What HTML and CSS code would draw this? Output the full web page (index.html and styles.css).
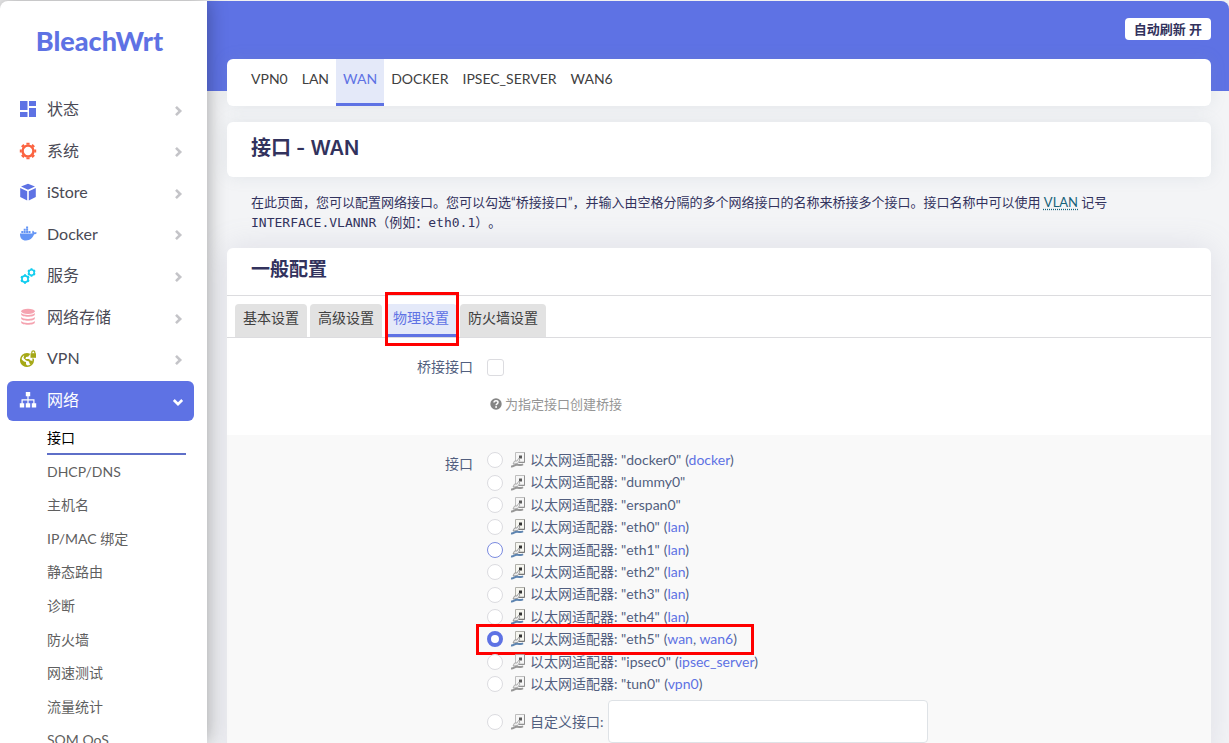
FILE: index.html
```html
<!DOCTYPE html>
<html lang="zh-CN">
<head>
<meta charset="utf-8">
<meta name="viewport" content="width=device-width, initial-scale=1">
<title>BleachWrt - 接口</title>
<link rel="stylesheet" href="styles.css">
</head>
<body>
<svg class="defs" aria-hidden="true">
  <symbol id="chevron" viewBox="0 0 12 12"><path d="M4 1.800 8.200 6 4 10.200" fill="none" stroke="currentColor" stroke-width="2.600"/></symbol>
  <symbol id="port" viewBox="0 0 16 16">
    <path d="M5.500 .5h9v9.500h-9z" fill="#f6f6f0" stroke="#b0b0aa" stroke-width="1"/>
    <path d="M14.500 .5v10H9" fill="none" stroke="#777" stroke-width="1"/>
    <rect class="port-dot" x="9" y="3.500" width="3" height="3"/>
    <path d="M3 12 4.500 9H7l1.500-2.500L10 8l-2.500 3.500z" fill="#eee" stroke="#888" stroke-width=".8"/>
    <path class="cable" d="M1 14.500c3 .3 3-1.700 6-1.700s4 1 6-.5" fill="none" stroke-width="2"/>
  </symbol>
</svg>
<div class="app">
  <aside class="sidebar">
    <a class="brand" href="#">BleachWrt</a>
    <nav aria-label="主菜单">
      <ul class="menu">
        <li><a href="#"><svg class="icon" viewBox="0 0 18 18" fill="#5e72e4"><path d="M1 1h7.500v9H1zM10 1h7v5h-7zM1 12h7.500v5H1zM10 8h7v9h-7z"/></svg><span>状态</span><svg class="arrow"><use href="#chevron"/></svg></a></li>
        <li><a href="#"><svg class="icon" viewBox="0 0 18 18" fill="none" stroke="#fb6340"><circle cx="9" cy="9" r="5.400" stroke-width="2.400"/><path stroke-width="3.200" d="M9 .8v2M9 15.200v2M.8 9h2M15.200 9h2M3.200 3.200l1.400 1.400M13.400 13.400l1.400 1.400M3.200 14.800l1.400-1.400M13.400 4.600l1.400-1.400"/></svg><span>系统</span><svg class="arrow"><use href="#chevron"/></svg></a></li>
        <li><a href="#"><svg class="icon" viewBox="0 0 18 18" fill="#5e72e4"><path d="M9 .7 16 3.600 9 6.800 2 3.600zM1.200 5l7 3.200v9.200l-7-3.400zM16.800 5l-7 3.200v9.200l7-3.400z"/></svg><span>iStore</span><svg class="arrow"><use href="#chevron"/></svg></a></li>
        <li><a href="#"><svg class="icon" viewBox="0 0 18 18" fill="#6495f5"><path d="M1 8.500h12.600c-.7-1-.5-2.200.3-3 .8.500 1.300 1.200 1.300 2 1-.3 2-.1 2.600.3-.4 1-1.400 1.500-2.700 1.500C13.800 13 11 15.500 7 15.500 3 15.500.8 13 1 8.500zM2.300 6.100h2v2h-2zM4.700 6.100h2v2h-2zM7.100 6.100h2v2h-2zM9.500 6.100h2v2h-2zM4.700 3.800h2v2h-2zM7.100 3.800h2v2h-2zM7.100 1.500h2v2h-2z"/></svg><span>Docker</span><svg class="arrow"><use href="#chevron"/></svg></a></li>
        <li><a href="#"><svg class="icon" viewBox="0 0 18 18" fill="none" stroke="#11cdef"><circle cx="6" cy="12" r="3.100" stroke-width="1.700"/><path stroke-width="2" d="M6 7.300v1.400M6 15.300v1.400M1.900 9.600l1.300.8M8.800 13.600l1.300.8M1.900 14.400l1.300-.8M8.800 10.400l1.300-.8"/><circle cx="12.500" cy="5.500" r="2.700" stroke-width="1.600"/><path stroke-width="1.900" d="M12.500 1.300v1.300M12.500 8.400v1.300M8.900 3.400l1.100.7M15 6.900l1.100.7M8.900 7.600l1.100-.7M15 4.100l1.100-.7"/></svg><span>服务</span><svg class="arrow"><use href="#chevron"/></svg></a></li>
        <li><a href="#"><svg class="icon" viewBox="0 0 18 18" fill="#f5a3b0"><ellipse cx="9" cy="3.300" rx="6.800" ry="2.600"/><path d="M2.200 5c1.500 2.600 12.100 2.600 13.600 0v1.600c0 3-13.600 3-13.600 0zM2.200 9c1.500 2.600 12.100 2.600 13.600 0v1.600c0 3-13.600 3-13.600 0zM2.200 13c1.500 2.600 12.100 2.600 13.600 0v1.600c0 3-13.600 3-13.600 0z"/></svg><span>网络存储</span><svg class="arrow"><use href="#chevron"/></svg></a></li>
        <li><a href="#"><svg class="icon" viewBox="0 0 18 18"><circle cx="8" cy="10" r="6.300" fill="#fff" stroke="#a5a815" stroke-width="1.600"/><path fill="#a5a815" d="M1.500 8.500 5 11.500l2 .5v2l1.500 2.300C4 17 .8 13 1.500 8.500zM5.500 4h5L9.500 6.500 7 7 6.500 9H10l1.500 1.500 2.500.5-2 3.500-1.500-1-.5-2-3-1L4.500 8z"/><path fill="#fff" d="M10.800 0H18v8.500h-7.200z"/><path fill="#a5a815" d="M11.500 3.200h5.500v4.600h-5.500z"/><path fill="none" stroke="#a5a815" stroke-width="1.200" d="M12.800 3.500V2.300a1.500 1.500 0 0 1 3 0v1.200"/></svg><span>VPN</span><svg class="arrow"><use href="#chevron"/></svg></a></li>
        <li><a class="active" href="#" aria-expanded="true"><svg class="icon" viewBox="0 0 18 18" fill="#fff"><path d="M6.800 1h4.400v4.200H6.800zM8.400 5h1.200v3.500H8.400zM2.500 8.300h13v1.200h-13zM2.500 9h1.200v4H2.500zM8.400 9h1.200v4H8.400zM14.300 9h1.200v4h-1.200zM.8 12.300h4.400v4.200H.8zM6.800 12.300h4.400v4.200H6.800zM12.800 12.300h4.400v4.200h-4.400z"/></svg><span>网络</span><svg class="arrow arrow-open"><use href="#chevron"/></svg></a>
          <ul class="submenu">
            <li><a class="current" href="#" aria-current="page">接口</a></li>
            <li><a href="#">DHCP/DNS</a></li>
            <li><a href="#">主机名</a></li>
            <li><a href="#">IP/MAC 绑定</a></li>
            <li><a href="#">静态路由</a></li>
            <li><a href="#">诊断</a></li>
            <li><a href="#">防火墙</a></li>
            <li><a href="#">网速测试</a></li>
            <li><a href="#">流量统计</a></li>
            <li><a href="#">SQM QoS</a></li>
          </ul>
        </li>
      </ul>
    </nav>
  </aside>
  <main class="main">
    <header class="topbar"><button class="refresh" type="button">自动刷新 开</button></header>
    <nav class="card iface-tabs" aria-label="接口">
      <a href="#">VPN0</a><a href="#">LAN</a><a class="active" href="#" aria-current="page">WAN</a><a href="#">DOCKER</a><a href="#">IPSEC_SERVER</a><a href="#">WAN6</a>
    </nav>
    <h1 class="card title">接口 - WAN</h1>
    <p class="intro">在此页面，您可以配置网络接口。您可以勾选“桥接接口”，并输入由空格分隔的多个网络接口的名称来桥接多个接口。接口名称中可以使用 <abbr title="Virtual Local Area Network">VLAN</abbr> 记号 <code>INTERFACE.VLANNR</code>（例如：<code>eth0.1</code>）。</p>
    <section class="card section">
      <h2>一般配置</h2>
      <nav class="section-tabs" aria-label="一般配置">
        <a href="#">基本设置</a><a href="#">高级设置</a><a class="active" href="#" aria-current="page">物理设置</a><a href="#">防火墙设置</a>
      </nav>
      <form>
        <div class="row">
          <label class="row-label" for="bridge">桥接接口</label>
          <div class="field">
            <input class="check" type="checkbox" id="bridge">
            <p class="help"><svg viewBox="0 0 12 12"><circle cx="6" cy="6" r="5.700" fill="#858585"/><path d="M4 4.600C4 2.200 8 2.300 8 4.500c0 1.400-1.900 1.300-1.900 2.700" fill="none" stroke="#fff" stroke-width="1.500"/><circle cx="6.100" cy="9" r=".95" fill="#fff"/></svg>为指定接口创建桥接</p>
          </div>
        </div>
        <div class="row shaded" role="radiogroup" aria-labelledby="iface-label">
          <span class="row-label" id="iface-label">接口</span>
          <div class="field">
            <ul class="options">
              <li><input type="radio" name="iface" id="i0"><label for="i0"><svg class="port down"><use href="#port"/></svg>以太网适配器: "docker0"</label><span>(<a href="#">docker</a>)</span></li>
              <li><input type="radio" name="iface" id="i1"><label for="i1"><svg class="port down"><use href="#port"/></svg>以太网适配器: "dummy0"</label></li>
              <li><input type="radio" name="iface" id="i2"><label for="i2"><svg class="port down"><use href="#port"/></svg>以太网适配器: "erspan0"</label></li>
              <li><input type="radio" name="iface" id="i3"><label for="i3"><svg class="port"><use href="#port"/></svg>以太网适配器: "eth0"</label><span>(<a href="#">lan</a>)</span></li>
              <li><input class="focused" type="radio" name="iface" id="i4"><label for="i4"><svg class="port"><use href="#port"/></svg>以太网适配器: "eth1"</label><span>(<a href="#">lan</a>)</span></li>
              <li><input type="radio" name="iface" id="i5"><label for="i5"><svg class="port"><use href="#port"/></svg>以太网适配器: "eth2"</label><span>(<a href="#">lan</a>)</span></li>
              <li><input type="radio" name="iface" id="i6"><label for="i6"><svg class="port"><use href="#port"/></svg>以太网适配器: "eth3"</label><span>(<a href="#">lan</a>)</span></li>
              <li><input type="radio" name="iface" id="i7"><label for="i7"><svg class="port"><use href="#port"/></svg>以太网适配器: "eth4"</label><span>(<a href="#">lan</a>)</span></li>
              <li class="marked"><input type="radio" name="iface" id="i8" checked><label for="i8"><svg class="port"><use href="#port"/></svg>以太网适配器: "eth5"</label><span>(<a href="#">wan</a>, <a href="#">wan6</a>)</span></li>
              <li><input type="radio" name="iface" id="i9"><label for="i9"><svg class="port down"><use href="#port"/></svg>以太网适配器: "ipsec0"</label><span>(<a href="#">ipsec_server</a>)</span></li>
              <li><input type="radio" name="iface" id="i10"><label for="i10"><svg class="port down"><use href="#port"/></svg>以太网适配器: "tun0"</label><span>(<a href="#">vpn0</a>)</span></li>
              <li class="custom"><input type="radio" name="iface" id="i11"><label for="i11"><svg class="port down"><use href="#port"/></svg>自定义接口:</label><input class="text" type="text" aria-label="自定义接口"></li>
            </ul>
          </div>
        </div>
      </form>
    </section>
  </main>
</div>
</body>
</html>
```
FILE: styles.css
```css
:root {
  --primary: #5e72e4;
  --heading: #32325d;
  --text: #525f7f;
  --cjk: "Noto Sans CJK SC", sans-serif;
}
* { box-sizing: border-box; }
body {
  margin: 0;
  color: var(--heading);
  background: #f0f0f1;
  font-family: Lato, var(--cjk);
  font-size: 14px;
}
ul, p, h1, h2 { margin: 0; padding: 0; }
ul { list-style: none; }
a { color: inherit; text-decoration: none; }
.defs { position: absolute; width: 0; height: 0; }

.app {
  display: flex;
  height: 100vh;
  padding-top: 1px;
  overflow: hidden;
}

/* Sidebar */
.sidebar {
  position: relative;
  z-index: 1;
  flex: 0 0 207px;
  background: #fff;
  border-top-left-radius: 8px;
  box-shadow: 0 0 20px rgba(0, 0, 0, .35);
  overflow: hidden;
}
.brand {
  display: block;
  height: 89px;
  padding-right: 8px;
  color: var(--primary);
  font-size: 27px;
  font-weight: 900;
  line-height: 80px;
  text-align: center;
}
.menu { padding: 0 13px 0 7px; }
.menu > li > a {
  display: flex;
  align-items: center;
  margin-bottom: .1em;
  padding: 0 10px .1em 12px;
  border-radius: 6px;
  color: #4a4a55;
  font-size: 16px;
  line-height: 2.4;
}
.menu > li > a.active { margin: 0; color: #fff; background: var(--primary); }
.icon { width: 18px; height: 18px; margin-right: 10px; }
.arrow { width: 12px; height: 12px; margin: 3px 0 0 auto; color: #c4c4c8; }
.arrow-open { color: #fff; transform: rotate(90deg); }
.submenu { padding: 0 8px 0 40px; }
.submenu a {
  display: block;
  color: #5f5f5f;
  line-height: 2.4;
}
.submenu .current { color: #000; box-shadow: inset 0 -2px #5e6fc8; }

/* Page */
.main {
  flex: 1;
  min-width: 0;
  padding: 0 18px 0 20px;
  border-top-right-radius: 8px;
  background: linear-gradient(var(--primary) 90px, #f3f4f6 90px);
}
.topbar {
  display: flex;
  justify-content: flex-end;
  align-items: center;
  height: 58px;
  padding-bottom: 2px;
}
.refresh {
  padding: 0 9px;
  border: 0;
  border-radius: 4px;
  color: var(--heading);
  background: #fff;
  font: bold 13px/22px Lato, var(--cjk);
}
.card {
  background: #fff;
  border-radius: 6px;
  box-shadow: 0 0 16px rgba(136, 152, 170, .15);
}
.iface-tabs { display: flex; padding: 0 17px; margin-bottom: 16px; }
.iface-tabs a {
  height: 47px;
  padding: 0 7px;
  color: #404040;
  line-height: 40px;
}
.iface-tabs a.active {
  color: var(--primary);
  background: #e4e9f9;
  border-bottom: 3px solid var(--primary);
}
.title {
  padding: 0 24px 3px;
  font-family: Inter, var(--cjk);
  font-size: 20px;
  font-weight: 600;
  line-height: 52px;
}
.intro {
  padding: 15px 24px;
  font-size: 13px;
  line-height: 20px;
  text-spacing-trim: space-all;
}
.intro abbr { color: #17627a; text-decoration: underline dotted; text-underline-offset: 2px; }
.intro code { font-family: "DejaVu Sans Mono", monospace; font-size: 13px; }

/* Settings section */
.section { box-shadow: 0 0 32px rgba(136, 136, 170, .2); }
.section h2 {
  height: 48px;
  padding: 0 24px;
  border-bottom: 1px solid #dcdcdf;
  font-size: 19px;
  line-height: 42px;
}
.section-tabs {
  display: flex;
  gap: 3px;
  padding: 8px 8px 0;
  border-bottom: 1px solid #dcdcdf;
}
.section-tabs a {
  height: 33px;
  padding: 0 8px;
  border-radius: 4px 4px 0 0;
  color: #404040;
  background: #e2e2e2;
  line-height: 28px;
}
.section-tabs .active {
  position: relative;
  color: var(--primary);
  background: #e4e9f9;
  border-bottom: 3px solid var(--primary);
}
.section-tabs .active::after,
.marked::after {
  content: "";
  position: absolute;
  border: 3px solid #f00;
  pointer-events: none;
}
.section-tabs .active::after { inset: -12px -2px -12px 0; }
.row {
  display: flex;
  min-height: 97px;
  padding: 14px 0;
  color: var(--text);
}
.row.shaded { background: #f9f9f9; }
.row-label { width: 25%; line-height: 30px; text-align: right; }
.field { flex: 1; padding-left: 14px; }
.check, .options input[type="radio"] {
  appearance: none;
  display: block;
  flex: none;
  width: 16px;
  height: 16px;
  margin: 0;
  border: 1px solid #dcdce0;
  background: #fff;
}
.check { width: 17px; height: 17px; margin: 7px 0 18px; border-radius: 3px; }
.help {
  display: flex;
  align-items: center;
  gap: 3px;
  padding-left: 3px;
  color: #959595;
  font-size: 13px;
  line-height: 20px;
}
.help svg { width: 12px; height: 12px; }
.options li {
  position: relative;
  display: flex;
  align-items: center;
  gap: 4px;
  line-height: 1.6;
}
.options input[type="radio"] { border-radius: 50%; margin-right: 3px; }
.options input[type="radio"].focused { border-color: #7b8be0; }
.options input[type="radio"]:checked { border: 4px solid var(--primary); }
.options label { display: flex; align-items: center; }
.options a { color: var(--primary); }
.port { width: 16px; height: 16px; margin-right: 4px; }
.port-dot { fill: #333; }
.cable { stroke: #5d84b0; }
.port.down { filter: grayscale(1) opacity(.8); }
.marked { width: max-content; }
.marked::after { inset: -4px -17px -4px -11px; }
.options .custom { margin-top: 5px; }
.text {
  width: 320px;
  height: 43px;
  border: 1px solid #dee2e6;
  border-radius: 4px;
  background: #fff;
}
```
